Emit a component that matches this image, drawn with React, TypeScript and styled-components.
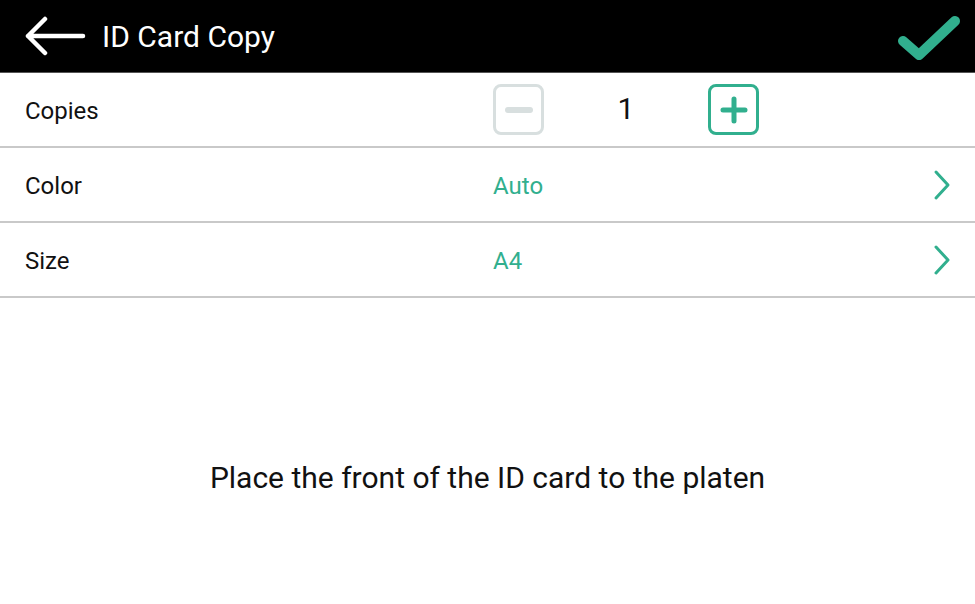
import styled, { createGlobalStyle } from "styled-components";

const Global = createGlobalStyle`
  html, body {
    margin: 0;
    padding: 0;
    background: #fff;
    font-family: Roboto, "Liberation Sans", sans-serif;
  }
`;

const TEAL = "#31af8e";

const Screen = styled.div`
  width: 975px;
  height: 604px;
  display: flex;
  flex-direction: column;
  background: #fff;
  overflow: hidden;
`;

const Header = styled.header`
  height: 72px;
  flex: none;
  background: #000;
  border-bottom: 1px solid #555;
  display: flex;
  align-items: center;
  padding: 0 14px 0 24px;
`;

const Title = styled.h1`
  margin: 0 0 0 16px;
  font-size: 30px;
  font-weight: 400;
  color: #fff;
  flex: 1;
`;

const Row = styled.div`
  height: 73px;
  flex: none;
  display: flex;
  align-items: center;
  border-bottom: 2px solid #c9c9c9;
  padding: 0 23px 0 25px;
`;

const Label = styled.div`
  width: 468px;
  font-size: 24px;
  color: #111;
  padding-top: 2px;
`;

const Value = styled.div`
  flex: 1;
  font-size: 24px;
  color: ${TEAL};
  padding-top: 2px;
`;

const Stepper = styled.div`
  display: flex;
  align-items: center;
`;

const StepButton = styled.button<{ $active: boolean }>`
  width: 51px;
  height: 51px;
  box-sizing: border-box;
  border: 3px solid ${(p) => (p.$active ? TEAL : "#d8dfdf")};
  border-radius: 8px;
  background: #fff;
  padding: 0;
  display: flex;
  align-items: center;
  justify-content: center;
  color: ${(p) => (p.$active ? TEAL : "#d8dfdf")};
`;

const Count = styled.div`
  width: 164px;
  text-align: center;
  font-size: 30px;
  color: #111;
  padding-bottom: 2px;
`;

const Message = styled.div`
  flex: 1;
  display: flex;
  align-items: center;
  justify-content: center;
  font-size: 30px;
  color: #111;
  padding-top: 52px;
`;

const Chevron = () => (
  <svg width="20" height="32" viewBox="0 0 20 32">
    <path d="M4 3 L16 16 L4 29" fill="none" stroke={TEAL} strokeWidth="3" strokeLinecap="round" strokeLinejoin="round" />
  </svg>
);

export default function App() {
  return (
    <Screen>
      <Global />
      <Header>
        <svg width="62" height="40" viewBox="0 0 62 40">
          <path d="M59 20 H4 M21 3 L4 20 L21 37" fill="none" stroke="#fff" strokeWidth="4.5" strokeLinecap="round" strokeLinejoin="round" />
        </svg>
        <Title>ID Card Copy</Title>
        <svg width="64" height="48" viewBox="0 0 64 48">
          <path d="M6 29 L22 43 L58 9" fill="none" stroke={TEAL} strokeWidth="10" strokeLinecap="round" strokeLinejoin="round" />
        </svg>
      </Header>
      <Row>
        <Label>Copies</Label>
        <Stepper>
          <StepButton $active={false}>
            <svg width="30" height="30" viewBox="0 0 30 30">
              <path d="M4 15 H26" stroke="currentColor" strokeWidth="6" strokeLinecap="round" />
            </svg>
          </StepButton>
          <Count>1</Count>
          <StepButton $active>
            <svg width="30" height="30" viewBox="0 0 30 30">
              <path d="M4 15 H26 M15 4 V26" stroke="currentColor" strokeWidth="5" strokeLinecap="round" />
            </svg>
          </StepButton>
        </Stepper>
      </Row>
      <Row>
        <Label>Color</Label>
        <Value>Auto</Value>
        <Chevron />
      </Row>
      <Row>
        <Label>Size</Label>
        <Value>A4</Value>
        <Chevron />
      </Row>
      <Message>Place the front of the ID card to the platen</Message>
    </Screen>
  );
}
